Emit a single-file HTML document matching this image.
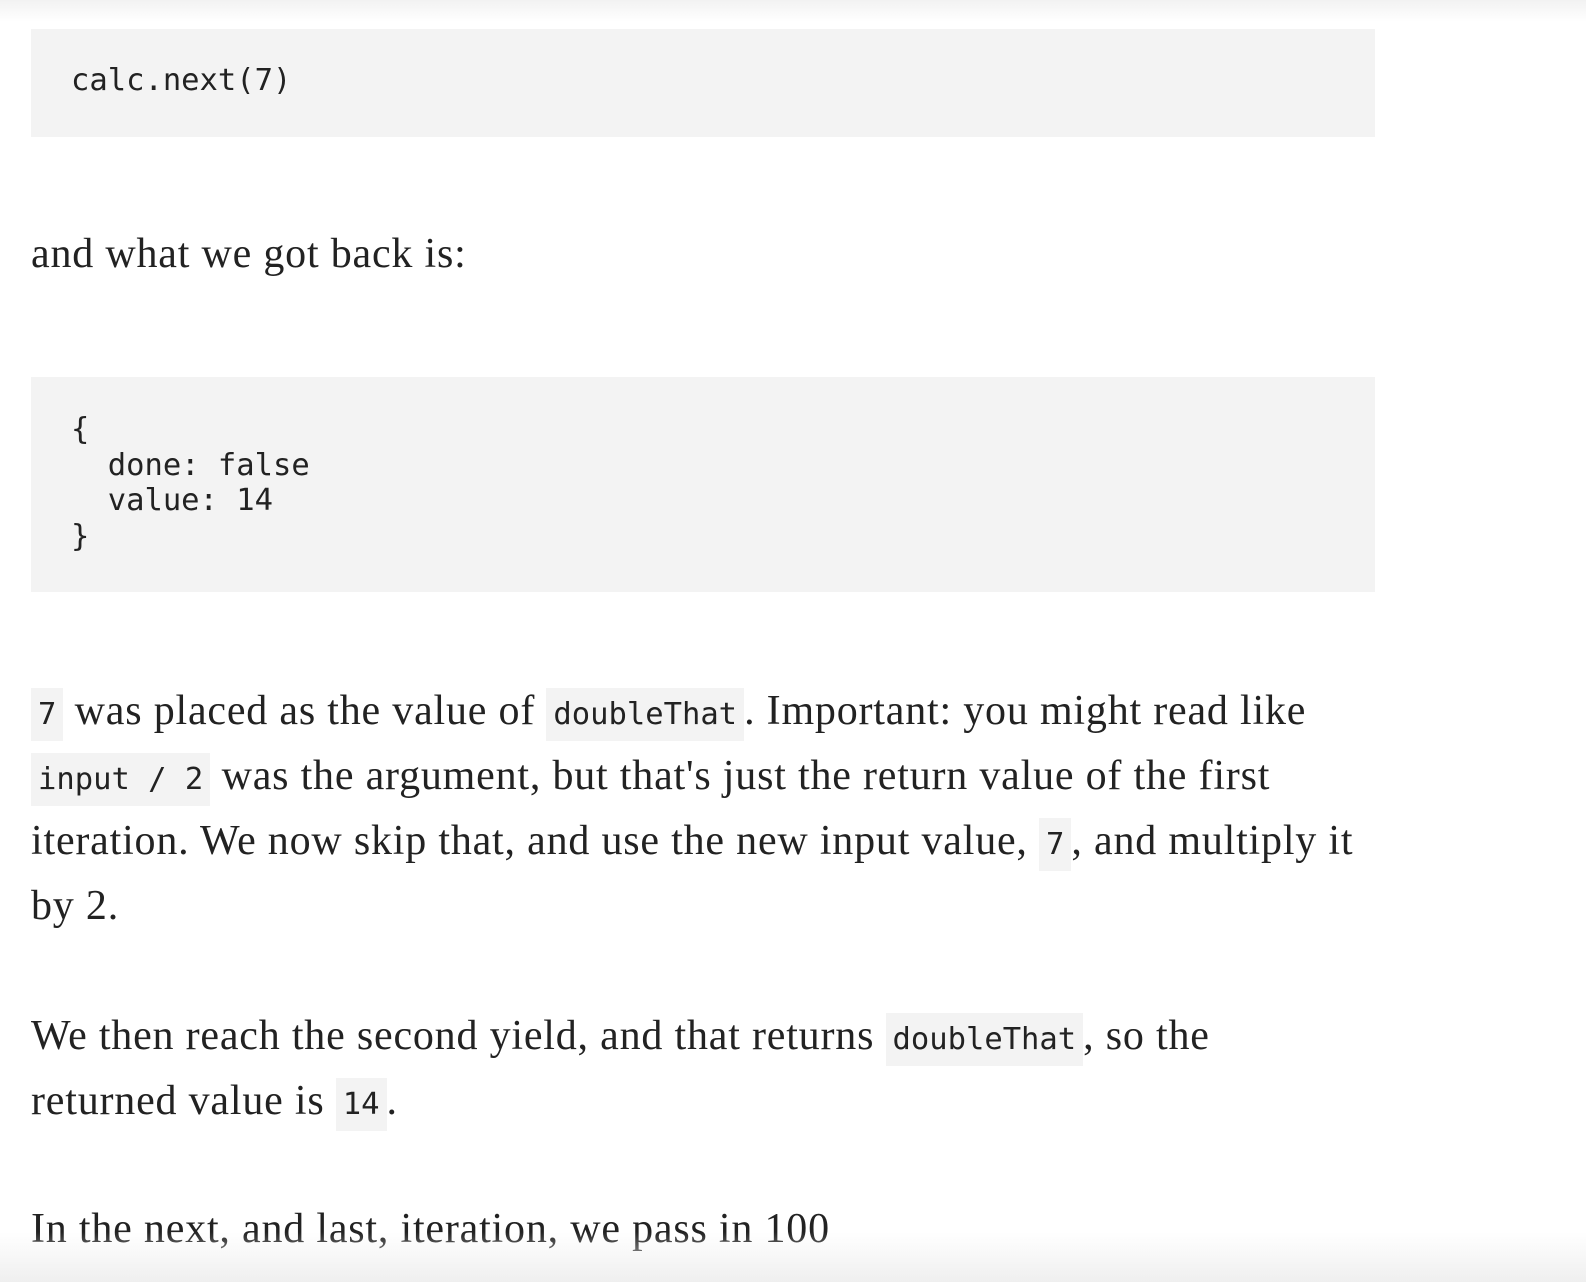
<!DOCTYPE html>
<html><head><meta charset="utf-8"><style>
body{margin:0;width:1586px;height:1282px;background:#fff;position:relative;overflow:hidden;color:#222;font-family:"Liberation Serif",serif;}
.top{position:absolute;left:0;top:0;width:1586px;height:22px;background:linear-gradient(#f2f2f2,#fff);}
.bot{position:absolute;left:0;bottom:0;width:1586px;height:50px;background:linear-gradient(rgba(255,255,255,0),#efefef);}
.pre{position:absolute;left:31px;width:1344px;background:#f3f3f3;font-family:"DejaVu Sans Mono",monospace;font-size:30.5px;white-space:pre;color:#222;}
.l{position:absolute;left:31px;height:65px;line-height:65px;font-size:42px;letter-spacing:0.8px;white-space:nowrap;}
code{font-family:"DejaVu Sans Mono",monospace;font-size:30.5px;letter-spacing:0;background:#f3f3f3;padding:9px 7px;}
</style></head><body>
<div class="top"></div>
<div class="pre" style="top:29px;height:108px;"><div style="position:absolute;left:40px;top:34px;line-height:36px;">calc.next(7)</div></div>
<div class="l" style="top:222px;">and what we got back is:</div>
<div class="pre" style="top:377px;height:215px;"><div style="position:absolute;left:40px;top:35px;line-height:35.5px;">{
  done: false
  value: 14
}</div></div>
<div class="l" style="top:679px;"><code>7</code> was placed as the value of <code>doubleThat</code>. Important: you might read like</div>
<div class="l" style="top:744px;"><code>input / 2</code> was the argument, but that's just the return value of the first</div>
<div class="l" style="top:809px;">iteration. We now skip that, and use the new input value, <code>7</code>, and multiply it</div>
<div class="l" style="top:874px;">by 2.</div>
<div class="l" style="top:1004px;">We then reach the second yield, and that returns <code>doubleThat</code>, so the</div>
<div class="l" style="top:1069px;">returned value is <code>14</code>.</div>
<div class="l" style="top:1197px;">In the next, and last, iteration, we pass in 100</div>
<div class="bot"></div>
</body></html>
